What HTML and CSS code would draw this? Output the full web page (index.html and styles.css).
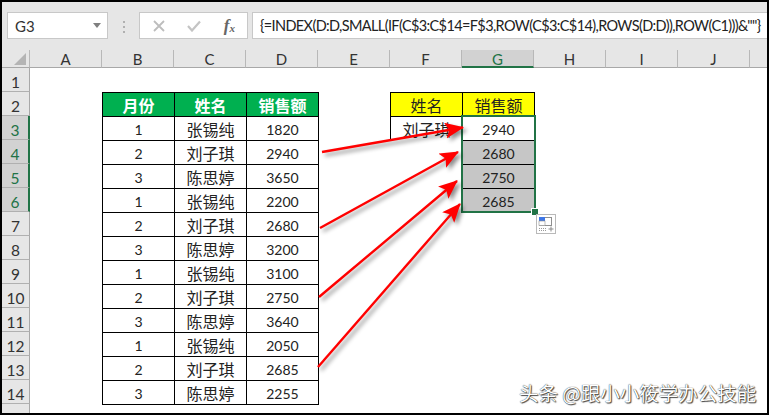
FILE: index.html
```html
<!DOCTYPE html>
<html lang="zh-CN">
<head>
<meta charset="utf-8">
<title>Excel</title>
<link rel="stylesheet" href="styles.css">
</head>
<body>
<div class="app">
  <div class="bar">
    <div class="namebox"><span>G3</span><svg class="drop" width="8" height="5" viewBox="0 0 8 5"><path d="M0 0H8L4 5Z" fill="#7f7f7f"/></svg></div>
    <div class="dots"><i></i><i></i><i></i></div>
    <div class="fxbox">
      <svg width="12" height="12" viewBox="0 0 12 12"><path d="M1 1L11 11M11 1L1 11" stroke="#bdbdbd" stroke-width="1.8" fill="none"/></svg>
      <svg width="14" height="12" viewBox="0 0 14 12"><path d="M1 6L5 10.5L13 1.5" stroke="#c4c4c4" stroke-width="2.2" fill="none"/></svg>
      <span class="fx">f<sub>x</sub></span>
    </div>
    <div class="formula">{=INDEX(D:D,SMALL(IF(C$3:C$14=F$3,ROW(C$3:C$14),ROWS(D:D)),ROW(C1)))&amp;""}</div>
  </div>
  <div class="sheet">
    <div class="corner"><svg width="12" height="12" viewBox="0 0 12 12"><path d="M12 0V12H0Z" fill="#b4b4b4"/></svg></div>
    <div class="ch">A</div><div class="ch">B</div><div class="ch">C</div><div class="ch">D</div><div class="ch">E</div><div class="ch">F</div><div class="ch sel">G</div><div class="ch">H</div><div class="ch">I</div><div class="ch">J</div><div class="ch last"></div>
    <div class="rows">
      <div class="rh">1</div><div class="rh">2</div><div class="rh sel">3</div><div class="rh sel">4</div><div class="rh sel">5</div><div class="rh sel">6</div><div class="rh">7</div><div class="rh">8</div><div class="rh">9</div><div class="rh">10</div><div class="rh">11</div><div class="rh">12</div><div class="rh">13</div><div class="rh">14</div><div class="rh end"></div>
    </div>
    <div class="tbl main">
      <div class="c hg">月份</div><div class="c hg">姓名</div><div class="c hg">销售额</div>
      <div class="c n">1</div><div class="c">张锡纯</div><div class="c n">1820</div>
      <div class="c n">2</div><div class="c">刘子琪</div><div class="c n">2940</div>
      <div class="c n">3</div><div class="c">陈思婷</div><div class="c n">3650</div>
      <div class="c n">1</div><div class="c">张锡纯</div><div class="c n">2200</div>
      <div class="c n">2</div><div class="c">刘子琪</div><div class="c n">2680</div>
      <div class="c n">3</div><div class="c">陈思婷</div><div class="c n">3200</div>
      <div class="c n">1</div><div class="c">张锡纯</div><div class="c n">3100</div>
      <div class="c n">2</div><div class="c">刘子琪</div><div class="c n">2750</div>
      <div class="c n">3</div><div class="c">陈思婷</div><div class="c n">3640</div>
      <div class="c n">1</div><div class="c">张锡纯</div><div class="c n">2050</div>
      <div class="c n">2</div><div class="c">刘子琪</div><div class="c n">2685</div>
      <div class="c n">3</div><div class="c">陈思婷</div><div class="c n">2255</div>
    </div>
    <div class="side">
      <div class="tbl two">
        <div class="c hy">姓名</div><div class="c hy">销售额</div>
        <div class="c">刘子琪</div><div class="c n">2940</div>
      </div>
      <div class="tbl one">
        <div class="c n gr">2680</div><div class="c n gr">2750</div><div class="c n gr">2685</div>
      </div>
    </div>
  </div>
  <div class="selection"><b class="handle"></b></div>
  <svg class="qa" width="20" height="20" viewBox="0 0 20 20">
    <rect x="0.5" y="0.5" width="19" height="19" fill="#fff" stroke="#b9b9b9"/>
    <rect x="3.5" y="3.5" width="12" height="8" fill="#fff" stroke="#8f8f8f"/>
    <rect x="3" y="3" width="6" height="4" fill="#3f77e6"/>
    <rect x="3" y="7" width="6" height="4.500" fill="#fff" stroke="#8f8f8f" stroke-width="0.6"/>
    <path d="M3 14.500H11M3 16.500H11" stroke="#9a9a9a" stroke-dasharray="1 1"/>
    <path d="M15 12.500V17.500M12.500 15H17.500" stroke="#8a8a8a"/>
  </svg>
  <svg class="arrows" width="769" height="415" viewBox="0 0 769 415">
    <defs>
      <marker id="head" markerUnits="userSpaceOnUse" markerWidth="24" markerHeight="20" refX="18" refY="8" orient="auto">
        <path d="M0 0L19 8L0 16L4 8Z" fill="#ff0000"/>
      </marker>
    </defs>
    <g class="lines">
      <line x1="322" y1="152" x2="463" y2="127.500" marker-end="url(#head)"/>
      <line x1="320" y1="228" x2="458" y2="152" marker-end="url(#head)"/>
      <line x1="319" y1="297" x2="457" y2="181" marker-end="url(#head)"/>
      <line x1="318" y1="367" x2="460" y2="204" marker-end="url(#head)"/>
    </g>
  </svg>
  <div class="mark">头条 @跟小小筱学办公技能</div>
</div>
</body>
</html>
```
FILE: styles.css
```css
* { box-sizing: border-box; }
html, body { margin: 0; padding: 0; }
body {
  width: 769px;
  height: 415px;
  background: #000;
  padding: 2px;
  overflow: hidden;
  font-family: Lato, "Noto Sans CJK SC", sans-serif;
  color: #222;
}
.app {
  width: 765px;
  height: 411px;
  background: #fff;
  display: flex;
  flex-direction: column;
  overflow: hidden;
}
.bar {
  height: 48px;
  flex: none;
  background: #e6e6e6;
  display: flex;
  align-items: flex-start;
  padding: 10px 0 0 5px;
}
.namebox, .fxbox, .formula {
  height: 27px;
  background: #fff;
  border: 1px solid #c8c8c8;
  display: flex;
  align-items: center;
}
.namebox {
  width: 101px;
  justify-content: space-between;
  padding: 0 6px 0 7px;
  font-size: 15px;
  color: #333;
}
.dots {
  width: 31px;
  display: flex;
  flex-direction: column;
  align-items: center;
  gap: 3px;
  padding-top: 9px;
}
.dots i { width: 2px; height: 2px; background: #b0b0b0; display: block; }
.fxbox {
  width: 109px;
  margin-right: 4px;
  padding: 0 12px 0 13px;
  justify-content: space-between;
}
.fx {
  font-family: "Liberation Serif", serif;
  font-style: italic;
  font-size: 17px;
  color: #666;
  font-weight: bold;
}
.fx sub { font-size: 11px; line-height: 0; vertical-align: -1px; }
.formula {
  flex: 1;
  border-right: 0;
  padding-left: 7px;
  font-size: 14.500px;
  letter-spacing: -0.620px;
  color: #222;
  white-space: nowrap;
}
.sheet {
  flex: 1;
  display: grid;
  grid-template-columns: 28px repeat(10, 72px) 17px;
  grid-template-rows: 18px 24px repeat(13, 24px) 1fr;
}
.corner {
  background: #e6e6e6;
  border-bottom: 1px solid #a8a8a8;
  border-right: 1px solid #b8b8b8;
  display: flex;
  justify-content: flex-end;
  align-items: flex-end;
  padding: 0 3px 2px 0;
}
.ch {
  background: #e6e6e6;
  border-bottom: 1px solid #a8a8a8;
  font-size: 15px;
  line-height: 19px;
  text-align: center;
  color: #333;
  border-right: 1px solid #b8b8b8;
}
.ch.last { border-right: 0; }
.ch.sel {
  background: #d2d2d2;
  color: #217346;
  border-bottom: 2px solid #217346;
}
.rows {
  grid-column: 1;
  grid-row: 2 / 17;
  display: grid;
  grid-template-rows: repeat(14, 24px) 1fr;
}
.rh {
  background: #e6e6e6;
  border-bottom: 1px solid #b0b0b0;
  border-right: 1px solid #a8a8a8;
  font-size: 15.500px;
  line-height: 29px;
  text-align: center;
  color: #333;
  overflow: hidden;
}
.rh.end { border-bottom: 0; }
.rh.sel {
  background: #d2d2d2;
  color: #217346;
  border-right: 2px solid #217346;
}
.tbl {
  display: grid;
  grid-auto-rows: 24px;
  border-right: 1px solid #000;
  border-bottom: 1px solid #000;
  box-sizing: content-box;
  background: #fff;
}
.main {
  grid-column: 3 / 6;
  grid-row: 3 / 16;
  grid-template-columns: repeat(3, 72px);
  align-self: start;
  margin-right: -1px;
}
.side {
  grid-column: 7 / 9;
  grid-row: 3 / 8;
  display: flex;
  flex-direction: column;
  align-items: flex-end;
}
.two { grid-template-columns: repeat(2, 72px); border-bottom: 0; margin-right: -1px; }
.one { grid-template-columns: 72px; margin-right: -1px; }
.c {
  border-left: 1px solid #000;
  border-top: 1px solid #000;
  display: flex;
  align-items: center;
  justify-content: center;
  font-size: 16px;
  color: #222;
}
.n { font-size: 14px; padding-top: 2px; }
.hg { background: #00b050; color: #fff; font-weight: bold; }
.hy { background: #ffff00; }
.gr { background: #c6c6c6; }
.selection {
  position: absolute;
  left: 461px;
  top: 115px;
  width: 75px;
  height: 98px;
  border: 2px solid #217346;
}
.handle {
  position: absolute;
  right: -4px;
  bottom: -4px;
  width: 6px;
  height: 6px;
  background: #217346;
  outline: 1px solid #fff;
}
.qa { position: absolute; left: 536px; top: 214px; }
.arrows { position: absolute; left: 0; top: 0; pointer-events: none; }
.lines {
  stroke: #ff0000;
  stroke-width: 2.400;
  filter: drop-shadow(3px 3px 2px rgba(0, 0, 0, .45));
}
.mark {
  position: absolute;
  left: 519px;
  top: 381px;
  font-family: "Noto Sans CJK SC", sans-serif;
  font-size: 19.500px;
  line-height: 24px;
  color: #fff;
  text-shadow: 0 0 1px #000, 1px 1px 1px rgba(0, 0, 0, .7);
  white-space: nowrap;
}
```
